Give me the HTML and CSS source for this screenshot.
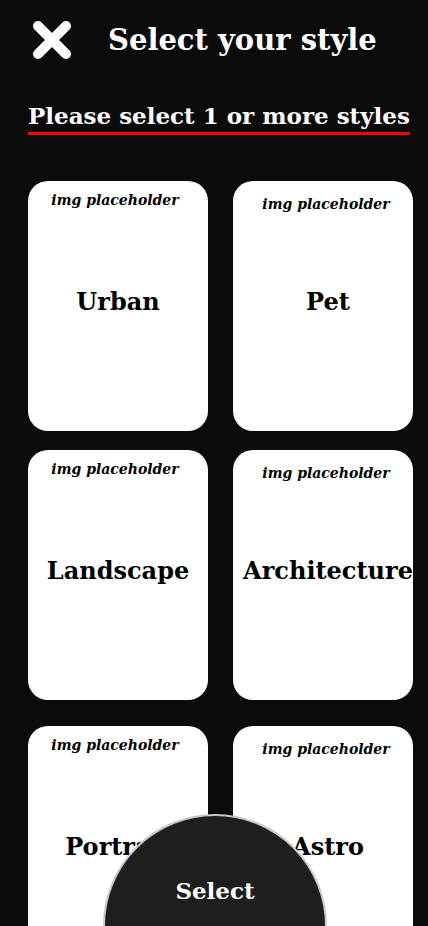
FILE: index.html
```html
<!DOCTYPE html>
<html lang="en">
<head>
<meta charset="utf-8">
<title>Select your style</title>
<link rel="stylesheet" href="styles.css">
</head>
<body>
<div class="page">
  <header class="header">
    <button class="close" aria-label="Close">
      <svg width="40" height="40" viewBox="0 0 40 40"><path d="M6 6 L34 34 M34 6 L6 34" stroke="#fff" stroke-width="10" stroke-linecap="round"/></svg>
    </button>
    <h1 class="title">Select your style</h1>
  </header>
  <h2 class="subtitle">Please select 1 or more styles</h2>
  <div class="grid">
    <div class="card left"><span class="ph">img placeholder</span><span class="label">Urban</span></div>
    <div class="card right"><span class="ph">img placeholder</span><span class="label">Pet</span></div>
    <div class="card left"><span class="ph">img placeholder</span><span class="label">Landscape</span></div>
    <div class="card right"><span class="ph">img placeholder</span><span class="label">Architecture</span></div>
    <div class="card left row3"><span class="ph">img placeholder</span><span class="label">Portrait</span></div>
    <div class="card right row3"><span class="ph">img placeholder</span><span class="label">Astro</span></div>
  </div>
  <button class="select">Select</button>
</div>
</body>
</html>
```
FILE: styles.css
```css
html, body {
  margin: 0;
  padding: 0;
  background: #0b0b0b;
  height: 926px;
  overflow: hidden;
}
.page {
  position: relative;
  height: 926px;
  font-family: "DejaVu Serif", Georgia, serif;
  color: #fff;
}
.header {
  display: flex;
  align-items: center;
  padding: 20px 0 0 32px;
  gap: 36px;
  height: 40px;
}
.close {
  background: none;
  border: 0;
  padding: 0;
  width: 40px;
  height: 40px;
  display: block;
}
.close svg { display: block; }
.title {
  margin: 0;
  font-size: 29px;
  font-weight: bold;
  line-height: 40px;
}
.subtitle {
  margin: 41px 0 0 28px;
  display: inline-block;
  font-size: 23px;
  font-weight: bold;
  line-height: 30px;
  border-bottom: 3px solid #ff0000;
  padding-bottom: 1px;
}
.grid {
  display: grid;
  grid-template-columns: 180px 180px;
  column-gap: 25px;
  row-gap: 19px;
  padding: 46px 0 0 28px;
}
.card {
  background: #fff;
  border-radius: 20px;
  height: 250px;
  color: #000;
  display: flex;
  flex-direction: column;
  align-items: center;
  position: relative;
}
.card.row3 { margin-top: 7px; }
.ph {
  font-style: italic;
  font-weight: bold;
  font-size: 14px;
  line-height: 18px;
}
.left .ph { margin-top: 10px; margin-left: -6px; }
.right .ph { margin-top: 14px; margin-left: 6px; }
.label {
  font-weight: bold;
  font-size: 24px;
  position: absolute;
  top: 106px;
  left: 0;
  right: 0;
  text-align: center;
  line-height: 30px;
}
.right .label { left: 8px; right: -2px; }
.select {
  position: absolute;
  left: 103px;
  top: 814px;
  width: 224px;
  height: 224px;
  border-radius: 50%;
  background: #1e1e1e;
  border: 2px solid #c8c8c8;
  color: #fff;
  font-family: "DejaVu Serif", Georgia, serif;
  font-weight: bold;
  font-size: 23px;
  box-sizing: border-box;
  display: flex;
  justify-content: center;
  align-items: flex-start;
  padding-top: 60px;
  line-height: 30px;
}
```
